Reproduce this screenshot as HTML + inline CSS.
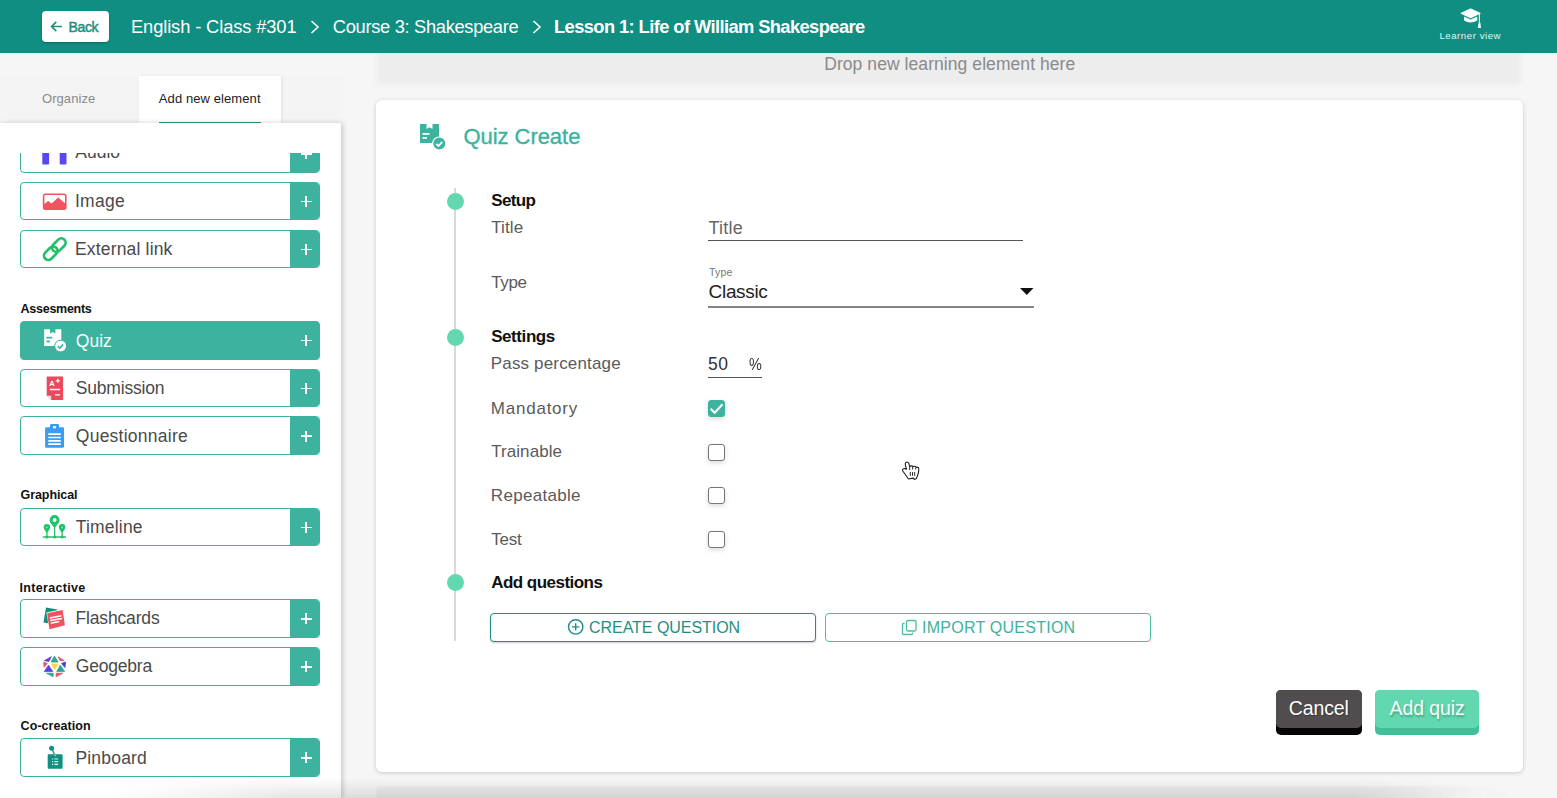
<!DOCTYPE html>
<html lang="en">
<head>
<meta charset="utf-8">
<title>Quiz Create</title>
<style>
*{box-sizing:border-box;margin:0;padding:0}
html,body{width:1557px;height:798px;overflow:hidden}
body{background:#f6f6f6;font-family:"Liberation Sans",sans-serif;position:relative;color:#555}
.t{position:absolute;white-space:nowrap;line-height:1}
.abs{position:absolute}
/* header */
#hdr{position:absolute;left:0;top:0;width:1557px;height:53px;background:#108e82}
#back{position:absolute;left:42px;top:11px;width:67px;height:31px;background:#fff;border-radius:4px;box-shadow:0 1px 2px rgba(0,0,0,.25)}
.crumb{color:#fff;font-size:18.3px}
/* sidebar */
#tabs{position:absolute;left:0;top:76px;width:341px;height:47px;background:#f4f4f4}
#tabA{position:absolute;left:139px;top:76px;width:142px;height:48px;background:#fff;box-shadow:1px 0 3px rgba(0,0,0,.08)}
#side{position:absolute;left:0;top:123px;width:341px;height:675px;background:#fff;box-shadow:2px 0 5px rgba(0,0,0,.18)}
.item{position:absolute;left:20px;width:300px;height:38.8px;border:1.5px solid #3db29e;border-radius:4px;background:#fff;overflow:hidden}
.item .plus{position:absolute;right:-1.5px;top:-1.5px;width:30.2px;height:38.8px;background:#3db29e}
.item .plus:before{content:"";position:absolute;left:10.4px;top:19.5px;width:11px;height:1.7px;background:#fff}
.item .plus:after{content:"";position:absolute;left:15.05px;top:14.85px;width:1.7px;height:11px;background:#fff}
.item .lbl{position:absolute;left:54px;top:8.5px;font-size:17.5px;line-height:1;color:#4a4a4a;white-space:nowrap}
.item.sel{background:#3db29e}
.item.sel .lbl{color:#fff}
.item svg{position:absolute}
.sec{position:absolute;left:20px;font-size:12.5px;font-weight:bold;color:#111;line-height:1;white-space:nowrap}
/* main */
#drop{position:absolute;left:377px;top:44px;width:1144px;height:41px;background:#ededed;border-radius:4px;filter:blur(2px)}
#card{position:absolute;left:376px;top:99.5px;width:1147px;height:672px;background:#fff;border-radius:6px;box-shadow:0 1px 4px rgba(0,0,0,.18)}
#card2{filter:blur(1.2px);position:absolute;left:376px;top:786px;width:1146px;height:20px;background:#ececec;border-radius:4px;-webkit-mask-image:linear-gradient(to right,#000 1010px,transparent 1135px);mask-image:linear-gradient(to right,#000 1010px,transparent 1135px)}
.lab{color:#5a5a5a;font-size:17px}
.hd{color:#111;font-size:17px;font-weight:bold}
.dot{position:absolute;left:447px;width:17px;height:17px;border-radius:50%;background:#62d8b0}
.cb{position:absolute;left:708.2px;width:17px;height:17px;border:1.3px solid #767676;border-radius:3px;background:#fff;box-shadow:0 2px 5px rgba(0,0,0,.14)}
.obtn{position:absolute;top:613px;height:29px;border-radius:4px;background:#fff}
</style>
</head>
<body>

<!-- main area -->
<div id="drop"></div>
<div class="t" id="dr" style="left:824.20px;top:56.40px;font-size:17.5px;color:#8a8a8a;letter-spacing:0.07px">Drop new learning element here</div>
<div id="card"></div>
<div id="card2"></div>


<!-- form -->
<svg class="abs" style="left:420px;top:124px" width="28" height="28" viewBox="0 0 28 28"><path d="M0 0h6.500v5l3-1.800 3 1.800V0H19v13.500a7 7 0 0 0-6.500 5.500H0z" fill="#3db29e"/><rect x="2.500" y="9" width="7" height="1.800" fill="#fff"/><rect x="2.500" y="13" width="4.500" height="1.800" fill="#fff"/><circle cx="19.300" cy="19.600" r="6.600" fill="#3db29e" stroke="#fff" stroke-width="1.200"/><path d="M16.300 19.800l2.200 2.200 3.800-4.200" fill="none" stroke="#fff" stroke-width="1.800"/></svg>
<div class="t" id="qc" style="left:463.40px;top:126.00px;font-size:22px;color:#3db29e;letter-spacing:-0.04px;-webkit-text-stroke:.35px #3db29e">Quiz Create</div>

<div class="abs" style="left:454.1px;top:188.3px;width:1.8px;height:453.2px;background:#d9d9d9"></div>
<div class="dot" style="top:192.8px"></div>
<div class="dot" style="top:329.3px"></div>
<div class="dot" style="top:574.3px"></div>

<div class="t hd" id="h1" style="left:491.20px;top:192.20px;letter-spacing:-0.65px">Setup</div>
<div class="t lab" id="l1" style="left:491.20px;top:219.00px;letter-spacing:0.13px">Title</div>
<div class="t" id="ph" style="left:708.5px;top:219.00px;font-size:18px;color:#666;letter-spacing:0.2px">Title</div>
<div class="abs" style="left:708.2px;top:239.9px;width:315px;height:1.3px;background:#555"></div>

<div class="t lab" id="l2" style="left:491.20px;top:273.60px;letter-spacing:-0.33px">Type</div>
<div class="t" id="ty" style="left:709.00px;top:266.80px;font-size:10.5px;color:#777;letter-spacing:0.21px">Type</div>
<div class="t" id="cl" style="left:708.60px;top:282.40px;font-size:19px;color:#222;letter-spacing:-0.33px">Classic</div>
<svg class="abs" style="left:1019px;top:287px" width="16" height="9" viewBox="0 0 16 9"><path d="M1 1h13.500L7.750 8z" fill="#111"/></svg>
<div class="abs" style="left:708.2px;top:306px;width:326px;height:1.5px;background:#858585"></div>

<div class="t hd" id="h2" style="left:491.20px;top:328.20px;letter-spacing:-0.43px">Settings</div>
<div class="t lab" id="l3" style="left:490.80px;top:355.00px;letter-spacing:0.16px">Pass percentage</div>
<div class="t" id="p50" style="left:708px;top:356.00px;font-size:17.5px;color:#333;letter-spacing:0.5px">50</div>
<div class="t" id="pct" style="left:748.6px;top:355.6px;font-size:17px;color:#333;transform:scaleX(.85);transform-origin:0 0">%</div>
<div class="abs" style="left:708.2px;top:377px;width:54px;height:1.2px;background:#555"></div>

<div class="t lab" id="l4" style="left:490.80px;top:400.20px;letter-spacing:0.77px">Mandatory</div>
<div class="t lab" id="l5" style="left:491.20px;top:443.00px;letter-spacing:0.07px">Trainable</div>
<div class="t lab" id="l6" style="left:490.80px;top:487.20px;letter-spacing:0.31px">Repeatable</div>
<div class="t lab" id="l7" style="left:491.20px;top:530.80px;letter-spacing:-0.19px">Test</div>

<div class="cb" style="top:400px;background:#3db29e;border-color:#3db29e"></div>
<svg class="abs" style="left:708.2px;top:400px" width="17" height="17" viewBox="0 0 18 18"><path d="M2.800 9.200l4.300 4.300 8.300-9" fill="none" stroke="#fff" stroke-width="2.100"/></svg>
<div class="cb" style="top:443.6px"></div>
<div class="cb" style="top:487px"></div>
<div class="cb" style="top:530.6px"></div>

<div class="t hd" id="h3" style="left:491.20px;top:574.00px;letter-spacing:-0.53px">Add questions</div>

<div class="obtn" style="left:490px;width:326px;border:1.500px solid #1f8f80;box-shadow:0 1px 2px rgba(0,0,0,.2)"></div>
<div class="obtn" style="left:825px;width:326px;border:1.500px solid #4cbfa3"></div>
<svg class="abs" style="left:567px;top:618px" width="18" height="18" viewBox="0 0 18 18"><circle cx="8.7" cy="8.9" r="7.2" fill="none" stroke="#1f8f80" stroke-width="1.4"/><path d="M8.7 5.2v7.400M5 8.900h7.400" stroke="#1f8f80" stroke-width="1.400"/></svg>
<div class="t" id="b1" style="left:589.00px;top:620.20px;font-size:16px;color:#1f8f80;letter-spacing:-0.04px">CREATE QUESTION</div>
<svg class="abs" style="left:901px;top:619px" width="17" height="17" viewBox="0 0 17 17"><rect x="5.500" y="1.500" width="9.500" height="10.500" rx="1.500" fill="none" stroke="#4cbfa3" stroke-width="1.300"/><path d="M3.500 4.500h-1a1 1 0 0 0-1 1v9a1 1 0 0 0 1 1h8a1 1 0 0 0 1-1v-1" fill="none" stroke="#4cbfa3" stroke-width="1.300"/></svg>
<div class="t" id="b2" style="left:922.00px;top:620.00px;font-size:16px;color:#3db29e;letter-spacing:0.25px">IMPORT QUESTION</div>

<!-- footer buttons -->
<div class="abs" style="left:1276px;top:690px;width:86px;height:45px;background:#060606;border-radius:5px"></div>
<div class="abs" style="left:1276px;top:690px;width:86px;height:38px;background:#514d4e;border-radius:5px"></div>
<div class="t" id="cn" style="text-shadow:1px 1px 1px rgba(0,0,0,.3);left:1288.80px;top:699.40px;font-size:19.500px;color:#fff;letter-spacing:-0.12px">Cancel</div>
<div class="abs" style="left:1375px;top:690px;width:104px;height:45px;background:#42bf98;border-radius:5px"></div>
<div class="abs" style="left:1375px;top:690px;width:104px;height:38px;background:#62d8b0;border-radius:5px"></div>
<div class="t" id="aq" style="left:1389.60px;top:699.40px;font-size:19.500px;color:#f4fffb;text-shadow:1px 2px 2px rgba(0,0,0,.25);letter-spacing:-0.09px">Add quiz</div>

<!-- cursor -->
<svg class="abs" style="left:890px;top:450px" width="45.09" height="40.08" viewBox="0 0 900 800"><path d="M318 250C300 255 305 290 310 310L330 385 295 372C270 365 240 390 252 415L368 578 465 562 485 588 522 574C560 500 580 450 574 370 570 345 540 340 522 350 520 320 480 318 462 332 450 312 410 315 392 328L375 262C368 238 335 240 318 250Z" fill="#fff" stroke="#222" stroke-width="22" stroke-linejoin="round"/><path d="M405 440V515M450 440V515M492 440V515M392 328V400M452 335V388M512 352V388" stroke="#222" stroke-width="19"/></svg>

<!-- header -->
<div id="hdr"></div>
<div id="back"></div>
<svg class="abs" style="left:50px;top:20px" width="13" height="13" viewBox="0 0 13 13"><path d="M12 6.5H2M6.3 1.8L1.6 6.5l4.7 4.7" fill="none" stroke="#1f8f80" stroke-width="1.7"/></svg>
<div class="t" id="bk" style="left:68.60px;top:20px;font-size:14px;font-weight:normal;-webkit-text-stroke:.5px #1f8f80;color:#1f8f80;letter-spacing:-0.40px">Back</div>
<div class="t crumb" id="c1" style="left:131.00px;top:17.8px;letter-spacing:-0.11px">English - Class #301</div>
<div class="t crumb" id="c2" style="left:332.80px;top:17.8px;letter-spacing:-0.31px">Course 3: Shakespeare</div>
<div class="t crumb" id="c3" style="left:554.00px;top:17.8px;font-weight:bold;letter-spacing:-0.58px">Lesson 1: Life of William Shakespeare</div>
<svg class="abs" style="left:309px;top:19px" width="12" height="16" viewBox="0 0 12 16"><path d="M2.5 2l6.5 6-6.5 6" fill="none" stroke="#fff" stroke-width="1.6"/></svg>
<svg class="abs" style="left:531px;top:19px" width="12" height="16" viewBox="0 0 12 16"><path d="M2.5 2l6.5 6-6.5 6" fill="none" stroke="#fff" stroke-width="1.6"/></svg>
<svg class="abs" style="left:1458px;top:6px" width="26" height="24" viewBox="1458 6 26 24"><path d="M1460.900 13.300l9.700-4.500 9.800 4.500-9.800 4.600z" fill="#fff" stroke="#fff" stroke-width=".8" stroke-linejoin="round"/><path d="M1464 16.600v3.700c1.500 1.400 4 2.100 6.600 2.100s5.200-.7 6.700-2.100v-3.700l-6.700 3z" fill="#f2fffc"/><path d="M1479.400 14v9.500" stroke="#f2fffc" stroke-width="1.100"/><path d="M1478.500 22.800h1.900l.6 5.300h-3.100z" fill="#f2fffc"/></svg>
<div class="t" id="lv" style="left:1439.40px;top:31.00px;font-size:9.7px;color:#d8fbf5;letter-spacing:0.52px">Learner view</div>

<!-- sidebar -->
<div id="tabs"></div>
<div id="tabA"></div>
<div id="side"></div>
<div class="abs" style="left:139px;top:123px;width:142px;height:3px;background:#fff"></div>
<div class="abs" style="left:159px;top:121.5px;width:102px;height:1.5px;background:#1f8f80"></div>
<div class="t" id="t1" style="left:42.00px;top:92.00px;font-size:13px;color:#8a8a8a;letter-spacing:0.06px">Organize</div>
<div class="t" id="t2" style="left:158.80px;top:92.00px;font-size:13px;color:#222;letter-spacing:0.09px">Add new element</div>


<!-- sidebar items -->
<div class="item" style="top:133.9px"><span class="lbl" id="i0" style="left:54.3px;top:9.5px">Audio</span><span class="plus"></span></div>
<div class="abs" style="left:0;top:123px;width:335px;height:30px;background:#fff"></div>

<div class="item" style="top:181.7px"><span class="lbl" id="i1" style="left:54.00px;top:10.30px;letter-spacing:0.25px">Image</span><span class="plus"></span></div>

<div class="item" style="top:229.5px"><span class="lbl" id="i2" style="left:54.00px;top:10.10px;letter-spacing:0.17px">External link</span><span class="plus"></span></div>

<div class="sec" id="s0" style="left:20.60px;top:303.20px;letter-spacing:-0.27px">Assesments</div>
<div class="item sel" style="top:320.8px"><span class="lbl" id="i3" style="left:54.80px;top:10.90px;letter-spacing:0.00px">Quiz</span><span class="plus"></span></div>

<div class="item" style="top:368.6px"><span class="lbl" id="i4" style="left:54.80px;top:10.70px;letter-spacing:-0.20px">Submission</span><span class="plus"></span></div>

<div class="item" style="top:416.4px"><span class="lbl" id="i5" style="left:54.80px;top:10.50px;letter-spacing:0.25px">Questionnaire</span><span class="plus"></span></div>

<div class="sec" id="s1" style="left:20.60px;top:489.40px;letter-spacing:-0.09px">Graphical</div>
<div class="item" style="top:507.7px"><span class="lbl" id="i6" style="left:54.80px;top:10.30px;letter-spacing:0.18px">Timeline</span><span class="plus"></span></div>

<div class="sec" id="s2" style="left:19.60px;top:581.60px;letter-spacing:0.30px">Interactive</div>
<div class="item" style="top:599px"><span class="lbl" id="i7" style="left:54.40px;top:10.10px;letter-spacing:-0.14px">Flashcards</span><span class="plus"></span></div>

<div class="item" style="top:646.9px"><span class="lbl" id="i8" style="left:54.80px;top:10.50px;letter-spacing:-0.20px">Geogebra</span><span class="plus"></span></div>

<div class="sec" id="s3" style="left:20.60px;top:720.20px;letter-spacing:0.06px">Co-creation</div>
<div class="item" style="top:738.1px"><span class="lbl" id="i9" style="left:54.40px;top:10.70px;letter-spacing:0.20px">Pinboard</span><span class="plus"></span></div>

<!-- sidebar icons (page coordinates) -->
<svg class="abs" style="left:40px;top:153px" width="30" height="13" viewBox="40 153 30 13"><rect x="42.300" y="150" width="6.800" height="14.600" rx="1" fill="#5a48ee"/><rect x="59.700" y="150" width="6.800" height="14.600" rx="1" fill="#5a48ee"/></svg>
<svg class="abs" style="left:40px;top:190px" width="30" height="24" viewBox="40 190 30 24"><rect x="43.600" y="194.300" width="22.200" height="14.800" rx="1.800" fill="#fff" stroke="#f3525f" stroke-width="1.600"/><path d="M43.600 209v-4.500l4.600-3.600 3.400 2.600 6.600-6 7.600 6.500v5z" fill="#f3525f"/></svg>
<svg class="abs" style="left:40px;top:235px" width="30" height="28" viewBox="40 235 30 28"><g transform="rotate(-45 54.800 249.200)" fill="none" stroke="#21c06b" stroke-width="2.700"><rect x="41.300" y="244.900" width="15.500" height="8.600" rx="4.300"/><rect x="52.800" y="244.900" width="15.500" height="8.600" rx="4.300"/></g></svg>
<svg class="abs" style="left:40px;top:326px" width="30" height="28" viewBox="40 326 30 28"><path d="M44.200 329.200h5.800v4.300l2.700-1.500 2.700 1.500v-4.300h5.900v11.300a6.200 6.200 0 0 0-6.500 5.400H44.200z" fill="#fff"/><rect x="46.300" y="336.800" width="6" height="1.700" fill="#3db29e"/><rect x="46.300" y="340.600" width="3.800" height="1.700" fill="#3db29e"/><circle cx="60.600" cy="346" r="5.900" fill="#fff" stroke="#3db29e" stroke-width="1"/><path d="M57.900 346.200l1.900 1.900 3.400-3.700" fill="none" stroke="#3db29e" stroke-width="1.600"/></svg>
<svg class="abs" style="left:40px;top:373px" width="30" height="30" viewBox="40 373 30 30"><path d="M46.700 376.500h16.400v23.400H51.200l-4.500-4.200z" fill="#ea4b5c"/><path d="M46.700 395.700h4.500v4.200z" fill="#fff" opacity=".8"/><text x="49.200" y="386" font-family="Liberation Sans,sans-serif" font-size="7.500" font-weight="bold" fill="#fff">A</text><path d="M55.800 380.800h4M57.800 378.800v4M50 389.500h10M55 394.800h5" stroke="#fff" stroke-width="1.300"/></svg>
<svg class="abs" style="left:40px;top:421px" width="30" height="30" viewBox="40 421 30 30"><rect x="45.100" y="427.300" width="18.900" height="20.400" rx="1.300" fill="#3d9cf0"/><rect x="50" y="424.100" width="9" height="7" rx="1.300" fill="#3d9cf0"/><rect x="53" y="426" width="3" height="2.400" fill="#dff0ff"/><path d="M48.300 434.200h12.500M48.300 437.500h12.500M48.300 440.800h12.500M48.300 444.100h12.500" stroke="#fff" stroke-width="1.700"/></svg>
<svg class="abs" style="left:40px;top:512px" width="30" height="30" viewBox="40 512 30 30"><g fill="#1fc26a"><path d="M54.600 528.300c-3-4.200-4.900-5.600-4.900-8.300a4.900 4.900 0 0 1 9.800 0c0 2.700-1.900 4.100-4.900 8.300z"/><path d="M46.900 533c-2-2.800-3.200-3.800-3.200-5.700a3.200 3.200 0 0 1 6.400 0c0 1.900-1.200 2.900-3.200 5.700z"/><path d="M62.100 533c-2-2.800-3.200-3.800-3.200-5.700a3.200 3.200 0 0 1 6.400 0c0 1.900-1.200 2.900-3.200 5.700z"/><circle cx="46.900" cy="537" r="1.500"/><circle cx="54.600" cy="537" r="1.500"/><circle cx="62.100" cy="537" r="1.500"/></g><path d="M54.600 527v10M46.900 532v5M62.100 532v5M42.800 537h23.200" stroke="#1fc26a" stroke-width="1.300" fill="none"/><circle cx="54.600" cy="520.100" r="2" fill="#fff"/><circle cx="46.900" cy="527.300" r=".9" fill="#7fe8b0"/><circle cx="62.100" cy="527.300" r=".9" fill="#7fe8b0"/></svg>
<svg class="abs" style="left:40px;top:603px" width="30" height="30" viewBox="40 603 30 30"><path d="M46 607.600l11.500 2 -2.500 15 -11.500-2z" fill="#128f7a"/><path d="M46.400 612.500l16.600-3.500 3 16.800-16.600 4.400z" fill="#fff"/><path d="M47.100 613.200l15.500-3.200 2.300 15.300-15.500 4z" fill="#f0525f"/><path d="M49.800 618l11.600-2.200M50.300 620.600l11.600-2.200M50.800 623.200l8.500-1.600" stroke="#fff" stroke-width="1.500"/></svg>
<svg class="abs" style="left:40px;top:652px" width="30" height="30" viewBox="40 652 30 30"><g transform="translate(35 644) scale(.05637)" stroke-width="14" stroke-linejoin="round"><path d="M345 215L285 320H410z" fill="#2fa596" stroke="#2fa596"/><path d="M165 295L290 225 245 310z" fill="#5b3fd0" stroke="#5b3fd0"/><path d="M410 228L520 295 445 295z" fill="#e0566b" stroke="#e0566b"/><path d="M155 325L218 345 160 412z" fill="#e0566b" stroke="#e0566b"/><path d="M470 345L542 320 532 418z" fill="#4b3fc8" stroke="#4b3fc8"/><path d="M290 355H410L350 455z" fill="#fbd84a" stroke="#fbd84a"/><path d="M240 375L165 490H315z" fill="#5b3fe0" stroke="#5b3fe0"/><path d="M450 375L385 490H525z" fill="#2fa596" stroke="#2fa596"/><path d="M205 520H325L320 582z" fill="#2fa596" stroke="#2fa596"/><path d="M375 520H490L375 582z" fill="#e0566b" stroke="#e0566b"/></g></svg>
<svg class="abs" style="left:40px;top:743px" width="30" height="30" viewBox="40 743 30 30"><rect x="47.700" y="754.200" width="14.900" height="14.600" rx=".8" fill="#128f80"/><circle cx="51.600" cy="748.200" r="2.500" fill="#128f80"/><path d="M51.600 748.200l3.500 7.600" stroke="#128f80" stroke-width="1.300"/><path d="M54.300 754.500l1.400 1.800" stroke="#dff" stroke-width="1"/><path d="M52 759h1.200M54.400 759h3.800M52 761.600h1.200M54.400 761.600h3.800M52 764.300h1.200M54.400 764.300h3.800" stroke="#d6fbf5" stroke-width="1.200"/></svg>
<div class="abs" style="left:110px;top:778px;width:1360px;height:20px;background:linear-gradient(to bottom,rgba(0,0,0,0),rgba(0,0,0,.1));-webkit-mask-image:linear-gradient(to right,transparent,#000 180px,#000 1240px,transparent);mask-image:linear-gradient(to right,transparent,#000 180px,#000 1240px,transparent)"></div>

</body>
</html>
